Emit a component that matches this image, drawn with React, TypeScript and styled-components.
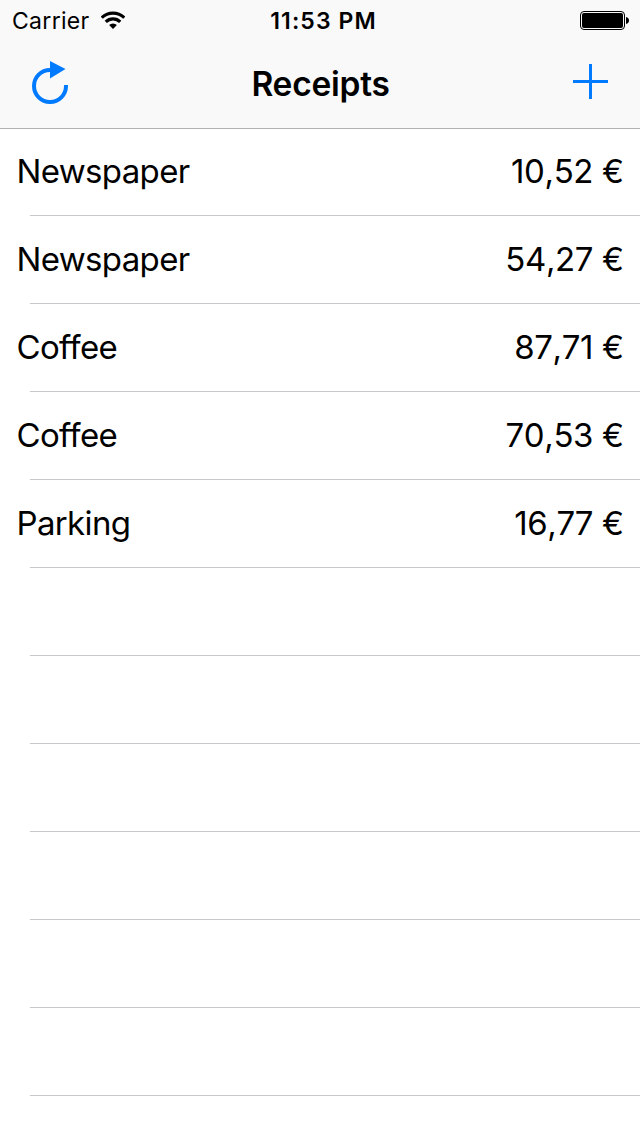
import React from 'react';
import styled, { createGlobalStyle } from 'styled-components';

const Global = createGlobalStyle`
  * { box-sizing: border-box; }
  body { margin: 0; background: #fff; color: #000; font-family: Inter, "Liberation Sans", sans-serif; }
`;
const Screen = styled.main`width: 640px; height: 1136px; overflow: hidden; background: #fff;`;
const Header = styled.header`height: 129px; background: #f9f9f9; border-bottom: 1px solid #b2b2b2;`;
const StatusBar = styled.div`
  height: 40px; padding: 0 11px 0 12px;
  display: grid; grid-template-columns: 1fr auto 1fr; align-items: center;
`;
const Carrier = styled.div`display: flex; align-items: center; gap: 11px;`;
const StatusText = styled.span<{ $bold?: boolean; $spacing: number }>`
  font-size: 23px; line-height: 38px; padding-top: 2px; white-space: nowrap;
  padding-left: ${p => (p.$bold ? 6 : 0)}px;
  font-weight: ${p => (p.$bold ? 600 : 400)}; letter-spacing: ${p => p.$spacing}px;
`;
const BatterySlot = styled.div`display: flex; justify-content: flex-end; padding-top: 1px;`;
const NavBar = styled.nav`
  height: 88px; padding: 0 32px 0 31px;
  display: grid; grid-template-columns: 1fr auto 1fr; align-items: center;
`;
const Title = styled.h1`
  margin: 0; padding: 1px 0 0 2px; font-size: 33.5px; line-height: 87px; font-weight: 600; letter-spacing: -0.25px;
`;
const IconButton = styled.button<{ $end?: boolean }>`
  border: 0; padding: 0 0 ${p => (p.$end ? 5 : 2)}px; background: none; display: flex; color: #007aff;
  justify-self: ${p => (p.$end ? 'end' : 'start')};
`;
const List = styled.ul`margin: 0; padding: 0; list-style: none;`;
const Row = styled.li`
  height: 88px; padding: 0 16px 5px; display: flex; justify-content: space-between; align-items: center;
  background: linear-gradient(#c8c7cc, #c8c7cc) 30px 86px / 610px 1px no-repeat;
`;
const Label = styled.span`padding-left: 0.5px; font-size: 33px; line-height: 82px; letter-spacing: -0.65px;`;
const Price = styled.span`padding-right: 0.5px; font-size: 33px; line-height: 82px; letter-spacing: -0.4px; font-kerning: none;`;

const receipts = [
  { name: 'Newspaper', price: '10,52 €' },
  { name: 'Newspaper', price: '54,27 €' },
  { name: 'Coffee', price: '87,71 €' },
  { name: 'Coffee', price: '70,53 €' },
  { name: 'Parking', price: '16,77 €' },
];

export default function App() {
  return (
    <Screen>
      <Global />
      <Header>
        <StatusBar>
          <Carrier>
            <StatusText $spacing={0.3}>Carrier</StatusText>
            <svg width="24" height="18" viewBox="0 0 24 18" fill="none" stroke="#000" strokeWidth="3.2">
              <path d="M.7 6.7a16 16 0 0 1 22.6 0M4.8 10.8a10.2 10.2 0 0 1 14.4 0" />
              <path d="M12 18l-3.9-3.9a5.5 5.5 0 0 1 7.8 0z" fill="#000" stroke="none" />
            </svg>
          </Carrier>
          <StatusText $bold $spacing={1.1}>11:53 PM</StatusText>
          <BatterySlot>
            <svg width="49" height="20" viewBox="0 0 49 20">
              <rect x=".5" y=".5" width="44" height="18" rx="3.5" fill="none" stroke="#000" />
              <rect x="2" y="2" width="41" height="15" rx="2" />
              <path d="M46 6c4 .5 4 6.500 0 7z" />
            </svg>
          </BatterySlot>
        </StatusBar>
        <NavBar>
          <IconButton aria-label="Refresh">
            <svg width="40" height="46" viewBox="0 0 40 46" fill="none">
              <path d="M19 10a16 16 0 1 0 16 16v-1" stroke="currentColor" strokeWidth="4" />
              <path d="M19 1l15.500 8-15.500 9.500z" fill="currentColor" />
            </svg>
          </IconButton>
          <Title>Receipts</Title>
          <IconButton $end aria-label="Add">
            <svg width="35" height="35" viewBox="0 0 35 35"><path d="M0 17.5h35M17.5 0v35" stroke="currentColor" strokeWidth="3" /></svg>
          </IconButton>
        </NavBar>
      </Header>
      <List>
        {receipts.map((r, i) => (
          <Row key={i}><Label>{r.name}</Label><Price>{r.price}</Price></Row>
        ))}
        {Array.from({ length: 6 }, (_, i) => <Row key={`empty-${i}`} />)}
      </List>
    </Screen>
  );
}
